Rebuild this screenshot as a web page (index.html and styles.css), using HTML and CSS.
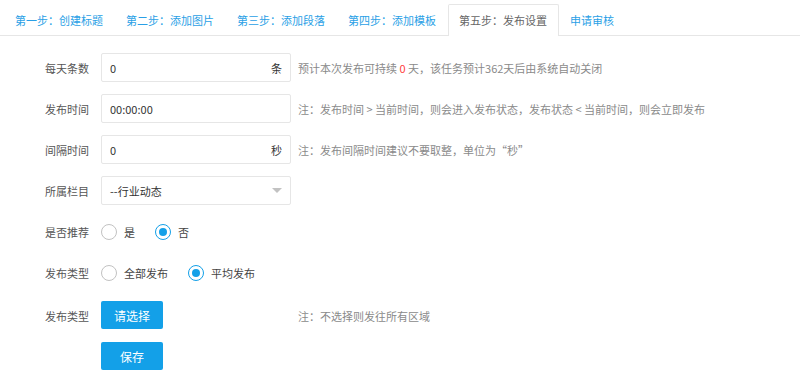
FILE: index.html
```html
<!DOCTYPE html>
<html lang="zh-CN">
<head>
  <meta charset="UTF-8">
  <meta name="viewport" content="width=device-width, initial-scale=1.0">
  <title>发布设置</title>
  <link rel="stylesheet" href="styles.css">
</head>
<body>
  <ul class="tabs">
    <li>第一步：创建标题</li>
    <li>第二步：添加图片</li>
    <li>第三步：添加段落</li>
    <li>第四步：添加模板</li>
    <li class="active">第五步：发布设置</li>
    <li>申请审核</li>
  </ul>

  <form class="form">
    <div class="row">
      <label class="label">每天条数</label>
      <div class="field">
        <input class="input" type="text" value="0">
        <span class="unit">条</span>
      </div>
      <div class="hint">预计本次发布可持续 <span class="red">0</span> 天，该任务预计362天后由系统自动关闭</div>
    </div>

    <div class="row">
      <label class="label">发布时间</label>
      <div class="field">
        <input class="input" type="text" value="00:00:00">
      </div>
      <div class="hint">注：发布时间 &gt; 当前时间，则会进入发布状态，发布状态 &lt; 当前时间，则会立即发布</div>
    </div>

    <div class="row">
      <label class="label">间隔时间</label>
      <div class="field">
        <input class="input" type="text" value="0">
        <span class="unit">秒</span>
      </div>
      <div class="hint">注：发布间隔时间建议不要取整，单位为“秒”</div>
    </div>

    <div class="row">
      <label class="label">所属栏目</label>
      <div class="field select">
        <span class="select-text">--行业动态</span>
        <span class="caret"></span>
      </div>
    </div>

    <div class="row">
      <label class="label">是否推荐</label>
      <div class="radios">
        <span class="radio"><i class="dot"></i>是</span>
        <span class="radio checked"><i class="dot"></i>否</span>
      </div>
    </div>

    <div class="row row-gap">
      <label class="label">发布类型</label>
      <div class="radios">
        <span class="radio"><i class="dot"></i>全部发布</span>
        <span class="radio checked"><i class="dot"></i>平均发布</span>
      </div>
    </div>

    <div class="row">
      <label class="label">发布类型</label>
      <div class="control">
        <button class="btn" type="button">请选择</button>
      </div>
      <div class="hint">注：不选择则发往所有区域</div>
    </div>

    <div class="row">
      <label class="label"></label>
      <div class="control">
        <button class="btn" type="button">保存</button>
      </div>
    </div>
  </form>
</body>
</html>
```

FILE: styles.css
```css
:root {
  --blue: #13a0e8;
  --border: #e6e6e6;
  --label: #555;
  --hint: #8a8a8a;
}
* { box-sizing: border-box; }
body {
  margin: 0;
  background: #fff;
  font-family: "Noto Sans CJK SC", "Noto Sans", sans-serif;
  font-size: 11px;
  color: #333;
}

/* Tabs */
.tabs {
  display: flex;
  list-style: none;
  margin: 0;
  padding: 4px 0 0 3.5px;
  border-bottom: 1px solid var(--border);
}
.tabs li {
  height: 31px;
  line-height: 30px;
  padding: 0 10.5px;
  border: 1px solid transparent;
  border-bottom: none;
  color: #2a9fe6;
  white-space: nowrap;
}
.tabs li.active {
  color: #666;
  border-color: var(--border);
  border-radius: 2px 2px 0 0;
  background: #fff;
  margin-bottom: -1px;
  height: 32px;
}

/* Form */
.form { padding-top: 17px; }
.row {
  display: flex;
  align-items: center;
  height: 29px;
  margin-bottom: 12px;
}
.row-gap { margin-bottom: 14px; }
.label {
  width: 101px;
  padding-right: 12px;
  text-align: right;
  color: var(--label);
}
.field, .control { width: 190px; height: 29px; }
.field {
  display: flex;
  align-items: center;
  border: 1px solid var(--border);
  border-radius: 2px;
  background: #fff;
}
.input {
  flex: 1;
  min-width: 0;
  height: 100%;
  border: none;
  outline: none;
  padding: 0 8px;
  font: inherit;
  color: #333;
  background: transparent;
}
.unit { padding-right: 8px; color: #333; }
.select { justify-content: space-between; padding: 0 8px; }
.select-text { color: #333; }
.caret {
  width: 0; height: 0;
  border-left: 5px solid transparent;
  border-right: 5px solid transparent;
  border-top: 5px solid #c2c2c2;
}
.hint { margin-left: 7px; color: var(--hint); white-space: nowrap; }
.red { color: #ff4040; }

/* Radios */
.radios { display: flex; align-items: center; gap: 20px; }
.radio { display: flex; align-items: center; gap: 7px; color: #444; }
.dot {
  width: 16px; height: 16px;
  border: 1px solid #c2c2c2;
  border-radius: 50%;
  display: flex; align-items: center; justify-content: center;
}
.radio.checked .dot { border-color: var(--blue); }
.radio.checked .dot::after {
  content: "";
  width: 8px; height: 8px;
  border-radius: 50%;
  background: var(--blue);
}

/* Buttons */
.btn {
  width: 62px;
  height: 28px;
  border: none;
  border-radius: 2px;
  background: var(--blue);
  color: #fff;
  font: inherit;
  font-size: 12px;
  cursor: pointer;
}
```
